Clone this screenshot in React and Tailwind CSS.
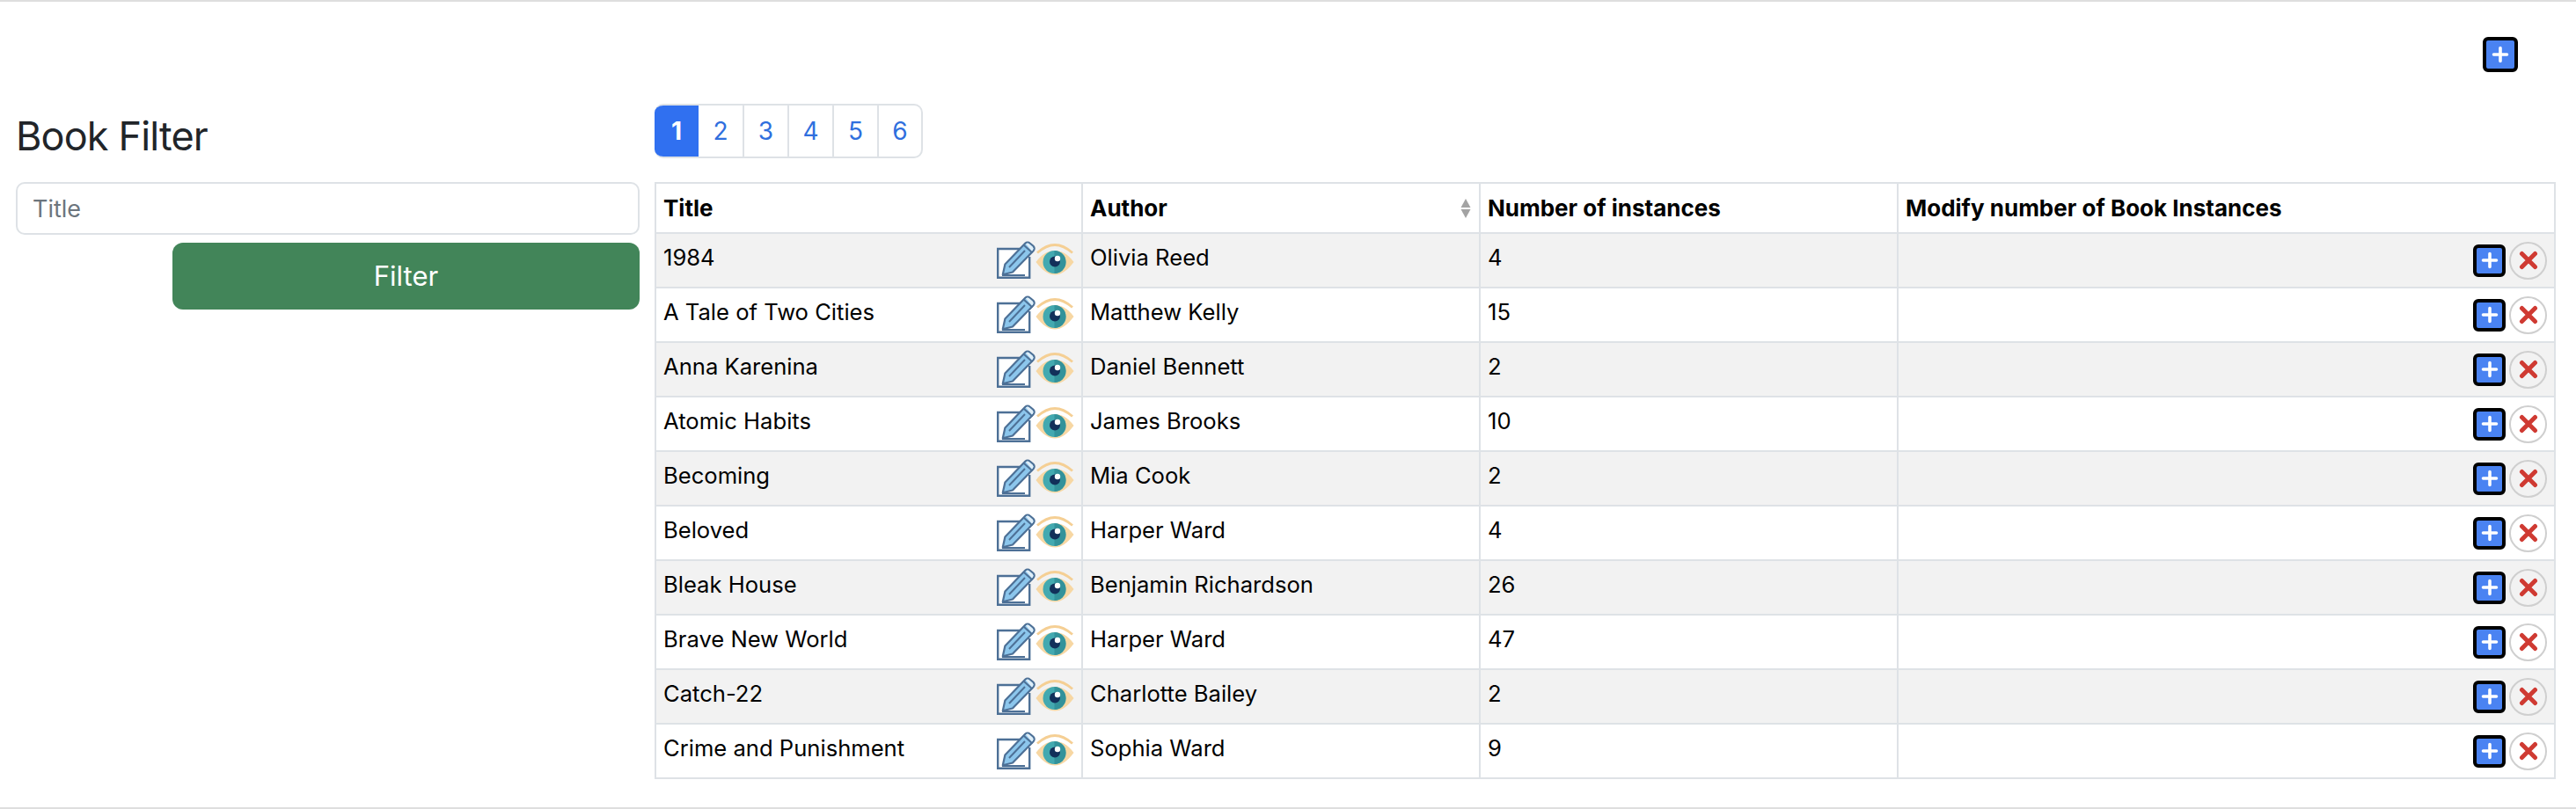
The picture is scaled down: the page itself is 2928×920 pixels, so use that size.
const books = [
  ["1984", "Olivia Reed", 4],
  ["A Tale of Two Cities", "Matthew Kelly", 15],
  ["Anna Karenina", "Daniel Bennett", 2],
  ["Atomic Habits", "James Brooks", 10],
  ["Becoming", "Mia Cook", 2],
  ["Beloved", "Harper Ward", 4],
  ["Bleak House", "Benjamin Richardson", 26],
  ["Brave New World", "Harper Ward", 47],
  ["Catch-22", "Charlotte Bailey", 2],
  ["Crime and Punishment", "Sophia Ward", 9],
];

function EditIcon() {
  return (
    <svg width="44" height="44" viewBox="0 0 44 44" className="shrink-0">
      <path d="M29 10H1.2v32.8h36V19" fill="#fff" stroke="#4d7096" strokeWidth="2.4" />
      <path d="M6 40h26" stroke="#4d7096" strokeWidth="2" />
      <path d="M32.5 3.5a3.6 3.6 0 0 1 5 0l4 3.4a3.6 3.6 0 0 1 .3 5L18 36.5 6.8 39.2l2.6-11.8z" fill="#8cc6ec" stroke="#4d7096" strokeWidth="2.2" strokeLinejoin="round" />
      <path d="M31 6l9.5 8.4" stroke="#4d7096" strokeWidth="2" />
      <path d="M33 4.5a3 3 0 0 1 4 0l3.600 3a3 3 0 0 1 .3 4l-1 1z" fill="#dfeef8" />
      <path d="M14 31L32 12" stroke="#4d7096" strokeWidth="2" />
    </svg>
  );
}

function EyeIcon() {
  return (
    <svg width="44" height="36" viewBox="0 0 44 36" className="shrink-0">
      <path d="M.5 21C8 11 15 8 22 8s14 3 21.500 13c-7.500 10-14.500 14.500-21.500 14.500S8 31 .5 21z" fill="#f7d7a3" />
      <path d="M2 10.500C10 3.500 16 1.500 22 1.500s12 2 20 9" fill="none" stroke="#f5cf94" strokeWidth="2.800" />
      <circle cx="21.500" cy="21" r="13" fill="#43a9b0" />
      <path d="M21.500 8a13 13 0 0 1 0 26z" fill="#33929a" />
      <circle cx="22" cy="20.500" r="6" fill="#12305a" />
      <circle cx="25" cy="17" r="3.200" fill="#fff" />
    </svg>
  );
}

function PlusButton({ size }) {
  return (
    <button className={`${size} flex items-center justify-center rounded-md border-4 border-black bg-[#4a83f2]`}>
      <svg width="20" height="20" viewBox="0 0 20 20">
        <path d="M10 2.500v15M2.500 10h15" stroke="#fff" strokeWidth="3.600" strokeLinecap="round" />
      </svg>
    </button>
  );
}

function RemoveButton() {
  return (
    <button className="flex h-[43px] w-[43px] items-center justify-center rounded-full border-2 border-[#cfcfcf]">
      <svg width="22" height="22" viewBox="0 0 22 22">
        <path d="M3.500 3.500l15 15M18.500 3.500l-15 15" stroke="#cf3a32" strokeWidth="5" strokeLinecap="round" />
      </svg>
    </button>
  );
}

function SortIcon() {
  return (
    <svg width="12" height="22" viewBox="0 0 12 22" className="mr-[1px] shrink-0">
      <path d="M6 0l5.500 10H.5z" fill="#a3a3a3" />
      <path d="M6 22L.5 12h11z" fill="#a3a3a3" />
    </svg>
  );
}

export default function App() {
  return (
    <div className="flex h-[920px] flex-col border-y-2 border-[#dedede] bg-white font-['Inter',sans-serif] text-[#000]">
      <div className="flex justify-end pr-[66px] pt-10">
        <PlusButton size="h-10 w-10" />
      </div>

      <div className="mt-9 flex items-start pl-[18px]">
        {/* Filter */}
        <div className="w-[709px] shrink-0">
          <h2 className="mt-[10px] text-[45px] leading-[54px] font-normal tracking-[-0.85px] text-[#212529]">Book Filter</h2>
          <input
            placeholder="Title"
            className="mt-[25px] block h-[60px] w-full rounded-[10px] border-2 border-[#dee2e6] px-[17px] text-[27px] placeholder:text-[#6c757d]"
          />
          <div className="mt-[9px] flex justify-end">
            <button className="h-[76px] w-[531px] rounded-xl bg-[#428559] text-[31px] text-white">Filter</button>
          </div>
        </div>

        {/* Table */}
        <div className="ml-[17px] w-[2161px] shrink-0">
          <div className="flex h-[62px] w-[305px] overflow-hidden rounded-[10px] border-2 border-l-0 border-[#dee2e6] text-[28px] text-[#2f6fde]">
            <a className="-my-[2px] flex w-[50px] items-center justify-center bg-[#3070f0] font-bold text-white">1</a>
            {[2, 3, 4, 5, 6].map((n) => (
              <a key={n} className="flex w-[51px] items-center justify-center border-l-2 border-[#dee2e6] last:flex-1 [&:nth-child(2)]:w-[50px] [&:nth-child(2)]:border-l-0">{n}</a>
            ))}
          </div>

          <table className="mt-[27px] w-full table-fixed border-collapse border-2 border-[#dee2e6] text-[25.6px]">
            <colgroup>
              <col className="w-[485px]" />
              <col className="w-[452px]" />
              <col className="w-[475px]" />
              <col />
            </colgroup>
            <thead>
              <tr className="h-[57px] text-[26px]">
                <th className="border-2 border-[#dee2e6] px-[8px] text-left font-bold">Title</th>
                <th className="border-2 border-[#dee2e6] px-[8px] text-left font-bold">
                  <div className="flex items-center justify-between">
                    Author
                    <SortIcon />
                  </div>
                </th>
                <th className="border-2 border-[#dee2e6] px-[8px] text-left font-bold">Number of instances</th>
                <th className="border-2 border-[#dee2e6] px-[8px] text-left font-bold">Modify number of Book Instances</th>
              </tr>
            </thead>
            <tbody>
              {books.map(([title, author, count], i) => (
                <tr key={title} className={`h-[62px] ${i % 2 === 0 ? "bg-[#f2f2f2]" : "bg-white"}`}>
                  <td className="border-2 border-[#dee2e6] px-[8px] pb-[6px]">
                    <div className="flex items-center justify-between">
                      {title}
                      <div className="flex items-center pt-[3px]">
                        <EditIcon />
                        <EyeIcon />
                      </div>
                    </div>
                  </td>
                  <td className="border-2 border-[#dee2e6] px-[8px] pb-[6px]">{author}</td>
                  <td className="border-2 border-[#dee2e6] px-[8px] pb-[6px]">{count}</td>
                  <td className="border-2 border-[#dee2e6] px-[8px]">
                    <div className="flex items-center justify-end gap-[4px]">
                      <PlusButton size="h-[37px] w-[37px]" />
                      <RemoveButton />
                    </div>
                  </td>
                </tr>
              ))}
            </tbody>
          </table>
        </div>
      </div>
    </div>
  );
}
